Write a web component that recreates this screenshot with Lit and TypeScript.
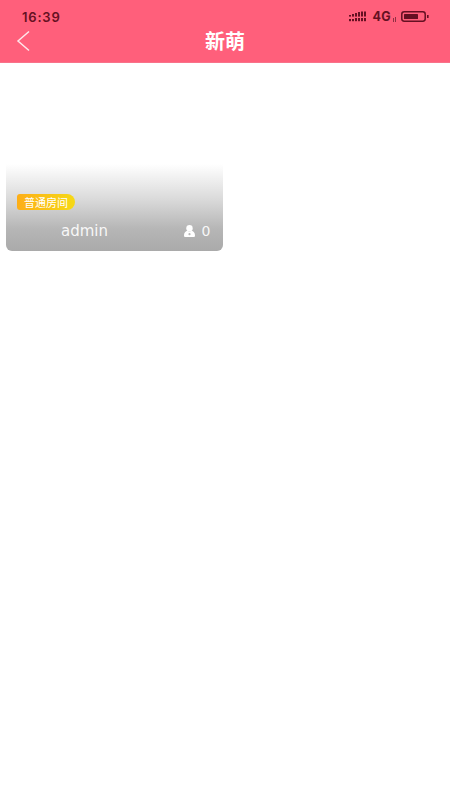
import { LitElement, html, css } from "lit";
import { customElement } from "lit/decorators.js";

@customElement("app-root")
export class AppRoot extends LitElement {
  static styles = css`
    :host {
      display: block;
      width: 450px;
      height: 800px;
      background: #fff;
      font-family: "Inter", "Noto Sans CJK SC", sans-serif;
    }
    .header {
      height: 63px;
      background: #ff5f7b;
      box-sizing: border-box;
      padding: 8px 0 0;
      border-bottom: 1px solid #f8728a;
      display: flex;
      flex-direction: column;
    }
    .status {
      height: 17px;
      display: flex;
      align-items: center;
      justify-content: space-between;
      padding: 0 21px 0 22px;
      color: #651022;
    }
    .time {
      font-size: 13px;
      font-weight: 600;
      letter-spacing: 0.8px;
    }
    .right {
      display: flex;
      align-items: center;
    }
    .net {
      font-size: 12.5px;
      font-weight: 700;
      margin-left: 6px;
      letter-spacing: 0.3px;
    }
    .signal { display: block; }
    .mini { display: block; margin: 5px 5px 0 2px; }
    .nav {
      display: grid;
      grid-template-columns: 1fr auto 1fr;
      align-items: center;
      height: 30px;
      padding-left: 16px;
      padding-right: 16px;
    }
    .back { display: block; }
    .title {
      color: #fff;
      font-size: 20px;
      font-weight: 700;
      font-family: "Noto Sans CJK SC", sans-serif;
      line-height: 32px;
    }
    .list {
      padding: 3px 6px;
    }
    .card {
      width: 216.5px;
      height: 185px;
      border-radius: 0 0 6px 6px;
      background: linear-gradient(180deg, #ffffff 0%, #ffffff 53%, #dadada 72%, #b6b6b6 88%, #aaaaaa 100%);
      box-sizing: border-box;
      padding: 0 12px 11px 11px;
      display: flex;
      flex-direction: column;
      justify-content: flex-end;
      color: #fff;
    }
    .tag {
      align-self: flex-start;
      height: 16px;
      line-height: 16px;
      padding: 0 7px;
      font-size: 11px;
      border-radius: 3px 8px 8px 3px;
      background: linear-gradient(90deg, #fdae17, #f6d916);
      font-family: "Noto Sans CJK SC", sans-serif;
      margin-bottom: 12px;
    }
    .info {
      display: flex;
      align-items: center;
      height: 18px;
    }
    .name {
      margin-left: 44px;
      font-family: "DejaVu Sans", sans-serif;
      font-size: 15px;
      line-height: 20px;
      opacity: 0.9;
      flex: 1;
    }
    .count {
      font-family: "DejaVu Sans", sans-serif;
      font-size: 14px;
      line-height: 20px;
      opacity: 0.9;
      margin-left: 7px;
    }
    .user { display: block; }
  `;

  render() {
    return html`
      <div class="header">
        <div class="status">
          <span class="time">16:39</span>
          <div class="right">
            <svg class="signal" width="18" height="11" viewBox="0 0 18 11" fill="#651022">
              <rect x="0" y="4" width="2" height="1.6" /><rect x="3" y="3" width="2" height="2.6" />
              <rect x="6" y="2" width="2" height="3.6" /><rect x="9" y="1" width="2" height="4.6" />
              <rect x="12" y="0.5" width="2" height="5" /><rect x="15" y="0.5" width="2" height="5" />
              <rect x="0" y="8" width="2" height="2.2" /><rect x="3" y="8" width="2" height="2.2" />
              <rect x="6" y="7" width="2" height="3.2" /><rect x="9" y="7" width="2" height="3.2" />
              <rect x="12" y="7" width="2" height="3.2" /><rect x="15" y="7" width="2" height="3.2" />
            </svg>
            <span class="net">4G</span>
            <svg class="mini" width="3" height="5" viewBox="0 0 3 5" fill="#8f3044">
              <rect x="0" y="1" width="1" height="4" /><rect x="2" y="0" width="1" height="5" />
            </svg>
            <svg width="28" height="11" viewBox="0 0 28 11">
              <rect x="0.8" y="0.8" width="23.4" height="9.4" rx="2.4" fill="none" stroke="#651022" stroke-width="1.5" />
              <rect x="3" y="3" width="14" height="5" rx="0.6" fill="#651022" />
              <rect x="26" y="4" width="1.6" height="3" fill="#651022" />
            </svg>
          </div>
        </div>
        <div class="nav">
          <svg class="back" width="14" height="22" viewBox="0 0 14 22" fill="none" stroke="#ffe6ea" stroke-width="1.5">
            <path d="M13 1.5 L2 11 L13 20.5" />
          </svg>
          <span class="title">新萌</span>
          <span></span>
        </div>
      </div>
      <div class="list">
        <div class="card">
          <span class="tag">普通房间</span>
          <div class="info">
            <span class="name">admin</span>
            <svg class="user" width="11" height="12" viewBox="0 0 11 12" fill="#fff">
              <circle cx="5.5" cy="3.2" r="3.2" />
              <path d="M0 10.5 C0 7.6 1.6 6.4 3.4 5.8 C4.5 6.8 6.5 6.8 7.6 5.8 C9.4 6.4 11 7.6 11 10.5 C11 11.5 10.4 12 9.5 12 H1.5 C0.6 12 0 11.5 0 10.5 Z" />
              <circle cx="5.5" cy="9.2" r="1.1" fill="#b8b8b8" />
            </svg>
            <span class="count">0</span>
          </div>
        </div>
      </div>
    `;
  }
}
